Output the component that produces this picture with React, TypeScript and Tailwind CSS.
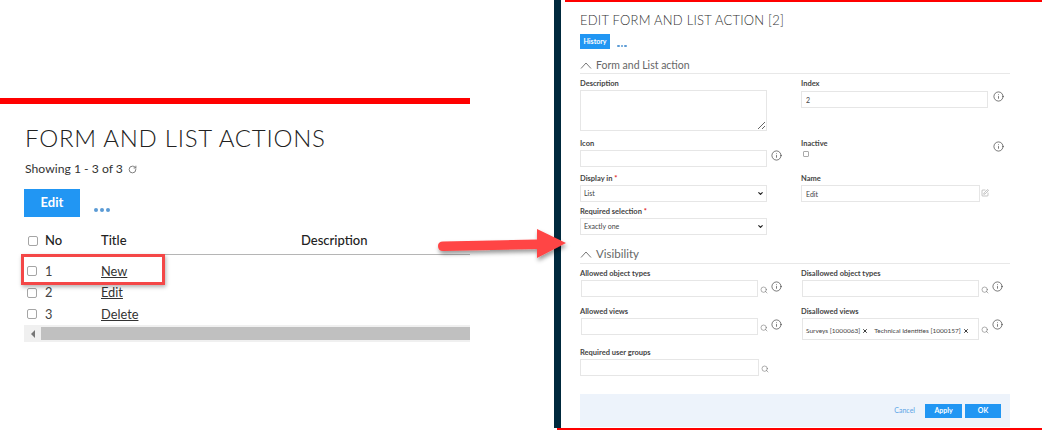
import { ChevronDown, Info, RotateCw, Search, SquarePen, X } from "lucide-react";
import type { ReactNode } from "react";

const rows = [
  { no: 1, title: "New" },
  { no: 2, title: "Edit" },
  { no: 3, title: "Delete" },
];

const Box = () => (
  <span className="block w-[10px] h-[10px] rounded-[2px] border border-[#a5a5a5] bg-white" />
);

const Dots = ({ size }: { size: "lg" | "sm" }) => (
  <div className={size === "lg" ? "flex gap-[2px]" : "flex gap-[1px]"}>
    {[0, 1, 2].map((i) => (
      <span
        key={i}
        className={
          size === "lg"
            ? "w-[4px] h-[4px] rounded-full bg-[#5b9bd5]"
            : "w-[2.5px] h-[2.5px] rounded-full bg-[#5b9bd5]"
        }
      />
    ))}
  </div>
);

const Label = ({ text, required }: { text: string; required?: boolean }) => (
  <div className="h-[10px] leading-[10px] text-[7.5px] font-bold text-[#444] whitespace-nowrap">
    {text}
    {required && <span className="text-[#e02020]"> *</span>}
  </div>
);

const InfoIcon = () => <Info size={11} strokeWidth={1.3} className="text-[#222] shrink-0" />;
const SearchIcon = () => <Search size={8} strokeWidth={1.4} className="text-[#555] shrink-0" />;

const SectionTitle = ({ text }: { text: string }) => (
  <div className="flex items-center gap-[4px] border-b border-[#e8e8e8] text-[#666]">
    <svg width="12" height="9" viewBox="0 0 12 9" fill="none" stroke="#555" strokeWidth="0.8" className="shrink-0">
      <path d="M1 7.5 L6 2 L11 7.5" />
    </svg>
    {text}
  </div>
);

const inputCls = "block h-[17px] border border-[#e6e6e6] bg-white px-[4px] text-[7px] text-[#444] font-['Lato',sans-serif]";

const Field = ({ text, required, className, children }: { text: string; required?: boolean; className?: string; children: ReactNode }) => (
  <div className={className}>
    <Label text={text} required={required} />
    <div className="mt-[1px] flex items-start">{children}</div>
  </div>
);

const Lookup = ({ info = true, left = 1 }: { info?: boolean; left?: number }) => (
  <div className={left === 1 ? "flex items-start pl-[1px]" : "flex items-start"}>
    <input readOnly className={info ? `${inputCls} w-[177px]` : `${inputCls} w-[179px]`} />
    <span className="ml-[2px] mt-[6px]">
      <SearchIcon />
    </span>
    {info && (
      <span className="ml-[3px] mt-[1px]">
        <InfoIcon />
      </span>
    )}
  </div>
);

const Chip = ({ name, id }: { name: string; id: string }) => (
  <span className="flex items-center gap-[2px] whitespace-nowrap">
    {name} [{id}]
    <X size={6} strokeWidth={3.5} className="text-[#222]" />
  </span>
);

const SelectBox = ({ value }: { value: string }) => (
  <div className="relative w-[187px]">
    <select
      defaultValue={value}
      className="block appearance-none w-full h-[17px] border border-[#e6e6e6] bg-white pl-[3px] text-[7px] text-[#444] font-['Lato',sans-serif]"
    >
      <option>{value}</option>
    </select>
    <ChevronDown size={7} strokeWidth={4} className="absolute right-[3px] top-[5px] text-[#222] pointer-events-none" />
  </div>
);

export default function App() {
  return (
    <div className="relative flex w-[1042px] h-[430px] overflow-hidden bg-white font-['Lato',sans-serif]">
      {/* left: list page */}
      <div className="w-[470px] pt-[98px] shrink-0">
        <div className="h-[6px] bg-[#ff0000]" />
        <h1 className="mt-[20px] ml-[25px] h-[28px] leading-[28px] text-[24px] font-light tracking-[0.75px] text-[#222] whitespace-nowrap">
          FORM AND LIST ACTIONS
        </h1>
        <div className="mt-[7px] ml-[25px] h-[20px] flex items-center gap-[5px] text-[12.2px] text-[#333]">
          Showing 1 - 3 of 3
          <RotateCw size={9} strokeWidth={2.5} className="text-[#777]" />
        </div>
        <div className="mt-[10px] ml-[24px] flex items-end gap-[14px]">
          <button className="w-[56px] h-[28px] bg-[#2196f3] text-white text-[13px] font-bold">Edit</button>
          <div className="pb-[5px]">
            <Dots size="lg" />
          </div>
        </div>
        <div className="mt-[11px] ml-[24px] h-[27px] flex items-center border-b border-[#b5b5b5] text-[13px] font-medium text-[#222]">
          <span className="w-[21px] pl-[4px]">
            <Box />
          </span>
          <span className="w-[56px]">No</span>
          <span className="w-[200px]">Title</span>
          <span>Description</span>
        </div>
        <div className="ml-[24px] pt-[5.5px]">
          {rows.map((row) => (
            <div key={row.no} className="h-[21.5px] flex items-center text-[12.8px] text-[#444]">
              <span className="w-[21px] pl-[3px]">
                <Box />
              </span>
              <span className="w-[56px]">{row.no}</span>
              <span className="underline text-[#333]">{row.title}</span>
            </div>
          ))}
        </div>
        <div className="ml-[24px] h-[17px] bg-[#f0f0f0] flex items-center">
          <span className="w-[17px] flex justify-center">
            <span className="border-y-[4px] border-r-[4px] border-y-transparent border-r-[#777]" />
          </span>
          <span className="flex-1 h-[13px] bg-[#c0c0c0]" />
        </div>
      </div>

      {/* right: edit form */}
      <div className="ml-[84px] w-[488px] flex flex-col shrink-0">
        <div className="h-[428px] flex">
          <div className="w-[7px] bg-[#00293d] shrink-0" />
          <div className="flex-1 pl-[4px]">
            <div className="h-[2px] bg-[#ff0000]" />
            <div className="pl-[15px] w-[445px]">
              <h2 className="mt-[11px] h-[14px] leading-[14px] text-[13px] font-light tracking-[0.22px] text-[#333] whitespace-nowrap">
                EDIT FORM AND LIST ACTION [2]
              </h2>
              <div className="mt-[7px] flex items-end gap-[7px]">
                <button className="w-[30px] h-[15px] bg-[#2196f3] text-white text-[7px] font-bold">History</button>
                <div className="pb-[2px]">
                  <Dots size="sm" />
                </div>
              </div>
              <div className="mt-[8px] h-[16px] text-[10.5px] leading-[16px]">
                <SectionTitle text="Form and List action" />
              </div>
              <div className="mt-[6px] grid grid-cols-[221px_1fr] grid-rows-[60px_35px_33px_33px]">
                <Field text="Description">
                  <textarea readOnly className="block w-[187px] h-[41px] border border-[#e6e6e6] bg-white" />
                </Field>
                <Field text="Index">
                  <input readOnly value="2" className={`${inputCls} w-[187px] mt-[1px]`} />
                  <span className="ml-[5px] mt-[1px]">
                    <InfoIcon />
                  </span>
                </Field>
                <Field text="Icon">
                  <input readOnly className={`${inputCls} w-[187px]`} />
                  <span className="ml-[4px]">
                    <InfoIcon />
                  </span>
                </Field>
                <div className="flex items-start">
                  <div className="w-[192px]">
                    <Label text="Inactive" />
                    <span className="block mt-[2px] ml-[2px] w-[6px] h-[6px] rounded-[1px] border border-[#aaa]" />
                  </div>
                  <span className="mt-[2px]">
                    <InfoIcon />
                  </span>
                </div>
                <Field text="Display in" required>
                  <SelectBox value="List" />
                </Field>
                <Field text="Name">
                  <input readOnly value="Edit" className={`${inputCls} w-[179px]`} />
                  <SquarePen size={8} strokeWidth={1.5} className="ml-[1px] mt-[4px] text-[#888]" />
                </Field>
                <Field text="Required selection" required>
                  <SelectBox value="Exactly one" />
                </Field>
              </div>
              <div className="mt-[5px] h-[18px] text-[11.5px] leading-[18px]">
                <SectionTitle text="Visibility" />
              </div>
              <div className="mt-[6px] grid grid-cols-[221px_1fr] grid-rows-[38px_41px_46px]">
                <div>
                  <Label text="Allowed object types" />
                  <div className="mt-[1px]">
                    <Lookup />
                  </div>
                </div>
                <div>
                  <Label text="Disallowed object types" />
                  <div className="mt-[1px]">
                    <Lookup />
                  </div>
                </div>
                <div>
                  <Label text="Allowed views" />
                  <div className="mt-[1px]">
                    <Lookup />
                  </div>
                </div>
                <div>
                  <Label text="Disallowed views" />
                  <div className="mt-[1px] pl-[1px] flex items-start">
                    <div className="w-[177px] h-[22px] border border-[#e6e6e6] px-[3px] pt-[4px] flex gap-[6px] text-[6.5px] text-[#444]">
                      <Chip name="Surveys" id="1000063" />
                      <Chip name="Technical Identities" id="1000157" />
                    </div>
                    <span className="ml-[2px] mt-[8px]">
                      <SearchIcon />
                    </span>
                    <span className="ml-[3px] mt-[1px]">
                      <InfoIcon />
                    </span>
                  </div>
                </div>
                <div>
                  <Label text="Required user groups" />
                  <div className="mt-[1px]">
                    <Lookup info={false} left={0} />
                  </div>
                </div>
              </div>
              <div className="h-[33px] bg-[#edf3fb] flex items-center justify-end pr-[9px] text-[7px]">
                <span className="text-[#5ba4e6] mr-[10px]">Cancel</span>
                <button className="w-[37px] h-[14px] bg-[#2196f3] text-white font-bold mr-[3px]">Apply</button>
                <button className="w-[36px] h-[14px] bg-[#2196f3] text-white font-bold">OK</button>
              </div>
            </div>
          </div>
        </div>
        <div className="ml-[3px] h-[2px] bg-[#ff0000]" />
      </div>

      {/* callouts drawn over the screenshot */}
      <div className="absolute left-[21px] top-[254px] w-[144px] h-[31px] border-[3px] border-[#f44747] shadow-[1px_2px_4px_rgba(0,0,0,0.3)]" />
      <svg className="absolute left-[430px] top-[220px]" width="145" height="50" viewBox="0 0 145 50">
        <defs>
          <filter id="arrowShadow" x="-10%" y="-30%" width="120%" height="170%">
            <feDropShadow dx="1" dy="3" stdDeviation="2" floodColor="#000" floodOpacity="0.4" />
          </filter>
        </defs>
        <path
          d="M13 21.5 L107 19.5 L107 9 L136 23 L107 38 L107 29 L13 31 Q8 31 8 26 Q8 21.5 13 21.5 Z"
          fill="#ff4444"
          filter="url(#arrowShadow)"
        />
      </svg>
    </div>
  );
}
